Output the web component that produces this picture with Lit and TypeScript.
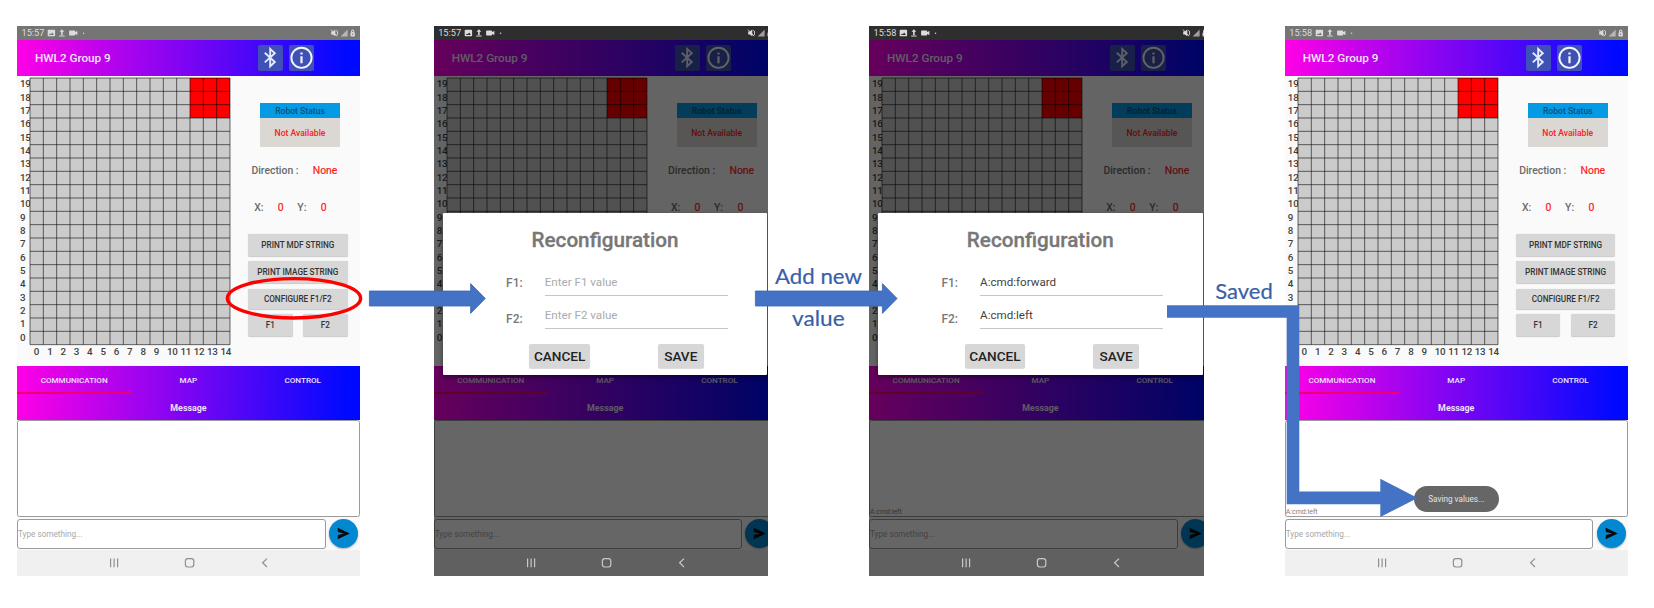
import { LitElement, html, svg, css, nothing } from "lit";
import { customElement, property } from "lit/decorators.js";
import { classMap } from "lit/directives/class-map.js";

const CELL = 13.333;
const range = (n: number) => Array.from({ length: n }, (_, i) => i);

@customElement("arena-map")
class ArenaMap extends LitElement {
  @property({ type: Boolean }) covered = false;
  static styles = css`
    :host { display: block; }
    .wrap { display: grid; grid-template-columns: 10px 200px; font: 500 9.8px/13.333px Roboto, sans-serif; color: #424242; }
    .rows { display: flex; flex-direction: column; margin-top: -1.1px; }
    .rows span { height: 13.333px; white-space: nowrap; letter-spacing: -0.2px; }
    .cols { grid-column: 2; display: grid; grid-template-columns: repeat(15, 13.333px); margin-top: -0.4px; }
    .cols span { padding-left: 3.8px; white-space: nowrap; letter-spacing: -0.3px; }
    svg { display: block; overflow: visible; }
  `;
  render() {
    const rows = this.covered ? 12 : 20;
    return html`<div class="wrap">
      <div class="rows">${range(20).map((i) => html`<span>${19 - i}</span>`)}</div>
      <svg width="200" height="266.7" viewBox="0 0 200 266.7">
        <rect width="200" height="266.7" fill="#cbcbcb"></rect>
        <rect x="160" width="40" height="40" fill="#ff0000"></rect>
        ${range(16).map((i) => svg`<line x1=${i * CELL} x2=${i * CELL} y1="0" y2=${rows * CELL} stroke="#000" stroke-opacity=".64" stroke-width=".9"></line>`)}
        ${range(rows + 1).map((i) => svg`<line y1=${i * CELL} y2=${i * CELL} x1="0" x2="200" stroke="#000" stroke-opacity=".64" stroke-width=".9"></line>`)}
      </svg>
      ${this.covered ? nothing : html`<div class="cols">${range(15).map((i) => html`<span>${i}</span>`)}</div>`}
    </div>`;
  }
}

@customElement("reconfig-dialog")
class ReconfigDialog extends LitElement {
  @property() f1 = "";
  @property() f2 = "";
  static styles = css`
    :host { display: block; box-sizing: border-box; background: #fff; border-radius: 1px; font-family: Roboto, sans-serif; box-shadow: 0 2px 5px rgba(0,0,0,.45); }
    h2 { margin: 0; padding-top: 14.2px; text-align: center; font: 500 20.7px/27px Roboto, sans-serif; color: #777; -webkit-text-stroke: .3px #777; }
    .fields { display: grid; grid-template-columns: 38.7px 183.3px; padding: 20.8px 0 0 63.4px; }
    .name { font: 500 12px/17px Roboto, sans-serif; color: #777; }
    .name.low { padding-top: 3.4px; }
    .field { height: 20px; margin-bottom: 12.4px; border-bottom: 1.4px solid #c6c6c6; font-size: 11.6px; line-height: 14px; color: #ababab; }
    .field.set { color: #3f3f3f; }
    .actions { display: flex; gap: 67.6px; padding: 2.6px 0 0 86.6px; }
    .btn { width: 60.7px; height: 23.8px; border-radius: 2px; background: #d7d7d7; box-shadow: 0 1px 1px rgba(0,0,0,.15); text-align: center; font: 500 13.6px/24.4px Roboto, sans-serif; color: #222; }
    .btn.save { width: 46.4px; }
  `;
  render() {
    return html`<h2>Reconfiguration</h2>
      <div class="fields">
        <span class="name">F1:</span>
        <div class=${classMap({ field: true, set: !!this.f1 })}>${this.f1 || "Enter F1 value"}</div>
        <span class="name low">F2:</span>
        <div class=${classMap({ field: true, set: !!this.f2 })}>${this.f2 || "Enter F2 value"}</div>
      </div>
      <div class="actions"><div class="btn">CANCEL</div><div class="btn save">SAVE</div></div>`;
  }
}

@customElement("phone-screen")
class PhoneScreen extends LitElement {
  @property() time = "15:57";
  @property() log = "";
  @property() toast = "";
  @property() f1 = "";
  @property() f2 = "";
  @property({ type: Boolean }) dialog = false;

  static styles = css`
    :host { display: block; overflow: hidden; height: 550px; font-family: Roboto, sans-serif; }
    .screen { position: relative; width: 343px; height: 550px; background: #fafafa; display: flex; flex-direction: column; }
    .status { height: 14px; flex: none; background: #757575; color: #dcdcdc; display: flex; align-items: center; justify-content: space-between; padding: 0 4px 0 4.5px; box-sizing: border-box; font-size: 9.2px; line-height: 14px; }
    .status > div { display: flex; align-items: center; }
    .status svg { display: block; }
    .header { height: 36.2px; flex: none; display: flex; align-items: center; background: linear-gradient(91deg, #ff00e6, #0009ff 96%); }
    .title { width: 223px; padding-left: 18px; color: #f1e6fb; font: 500 11.7px/16px Roboto, sans-serif; }
    .tile { width: 25.4px; height: 25.4px; margin-right: 5.6px; background: #3f51b5; border-radius: 2px; }
    .tile svg { display: block; }
    .body { height: 290px; flex: none; display: flex; background: #fafafa; }
    .body arena-map { padding: 2.3px 0 0 3px; }
    .robot { width: 80px; margin: 27.3px 0 0 30px; text-align: center; font: 500 8.6px/16px Roboto, sans-serif; }
    .robot .cap { background: #059ae4; color: #07517a; height: 14.7px; }
    .robot .val { background: #dbd7d3; color: #fb2020; height: 28.5px; line-height: 30.4px; }
    .pair { display: flex; height: 14px; font: 500 10.4px/15px Roboto, sans-serif; color: #6a6a6a; white-space: nowrap; }
    .pair b { font-weight: 400; color: #fb2020; -webkit-text-stroke: .2px #fb2020; }
    .dir { margin: 16.5px 0 0 21.4px; }
    .dir span { width: 61.4px; }
    .xy { margin: 22.6px 0 0 24.3px; }
    .xy > * { width: 23.5px; } .xy > b { width: 19.5px; }
    .buttons { display: grid; grid-template-columns: 44.7px 44.7px; column-gap: 10.3px; row-gap: 5.2px; margin: 19.9px 0 0 18px; }
    .key { height: 22.3px; border-radius: 1.5px; background: #d7d7d7; box-shadow: 0 .5px 1px rgba(0,0,0,.2); text-align: center; font: 500 8.2px/23px Roboto, sans-serif; color: #333; white-space: nowrap; }
    .wide { grid-column: 1 / 3; }
    .short { height: 20.2px; line-height: 21px; }
    .tabs { height: 54px; flex: none; background: linear-gradient(91deg, #ff00e6, #0009ff 96%); color: #efe0fd; }
    .tabrow { display: grid; grid-template-columns: repeat(3, 114.3px); text-align: center; font: 500 8.1px/28px Roboto, sans-serif; }
    .tab { height: 26px; border-bottom: 2px solid transparent; }
    .tab.on { border-bottom-color: #f0006c; }
    .msg { text-align: center; font: 700 8.9px/28.4px Roboto, sans-serif; height: 26px; }
    .log { height: 97px; flex: none; box-sizing: border-box; border: 1px solid #9a9a9a; border-radius: 2.5px; background: #fff; display: flex; align-items: flex-end; font-size: 7px; line-height: 8px; color: #808080; }
    .entry { display: flex; padding-top: 2px; height: 30.5px; flex: none; }
    .input { width: 308.6px; height: 29.6px; box-sizing: border-box; border: 1px solid #9a9a9a; border-radius: 3px; background: #fff; font-size: 8.2px; line-height: 28px; color: #a8a8a8; }
    .send { width: 29px; height: 29px; margin-left: 3.2px; border-radius: 50%; background: #0288d1; box-shadow: 0 1px 2px rgba(0,0,0,.3); }
    .nav { flex: 1; background: #f0f0f0; color: #8f8f8f; }
    .nav svg { display: block; }
    .shade { position: absolute; inset: 0; background: rgba(0,0,0,.6); }
    .dimmed .status { position: relative; z-index: 1; background: #2e2e2e; }
    .dimmed .nav { position: relative; z-index: 1; background: #606060; color: #c8c8c8; }
    reconfig-dialog { position: absolute; left: 9px; top: 186.7px; width: 324.6px; height: 162.6px; z-index: 2; }
    .toast { position: absolute; left: 129.4px; top: 460.4px; width: 84.4px; height: 25.6px; border-radius: 13px; background: #666; color: #e4e4e4; font-size: 8.2px; line-height: 26.6px; text-align: center; }
  `;

  render() {
    return html`<div class=${classMap({ screen: true, dimmed: this.dialog })}>
      <div class="status">
        <div>${this.time}
          <svg width="46" height="14" viewBox="0 0 46 14" fill="currentColor">
            <path fill-rule="evenodd" d="M4.4 3.7h6q.7 0 .7.7v5.2q0 .7-.7.7h-6q-.7 0-.7-.7V4.4q0-.7.7-.7zM4.9 9h5L8.2 6.6 6.9 8.2 6 7.4z"></path>
            <path d="M17.9 3.2l2.4 2.5h-1.6v3.2h-1.6V5.7h-1.6zM15.2 9.5h5.4v1h-5.4z"></path>
            <path d="M25.8 4.6h4.6q.7 0 .7.7v.8l2.3-1v3.8l-2.3-1v.8q0 .7-.7.7h-4.6q-.7 0-.7-.7V5.3q0-.7.7-.7z"></path>
            <circle cx="39.6" cy="7.2" r=".7"></circle>
          </svg>
        </div>
        <svg width="26" height="14" viewBox="0 0 26 14" fill="currentColor">
          <path d="M1.2 5.5h1.6L5.3 3.6v6.7L2.8 8.6H1.2z"></path>
          <path d="M1 3.6l6 6.6M6.2 4.4q1.6 0 1.4 2.6T6.4 9.8" fill="none" stroke="currentColor" stroke-width=".9"></path>
          <path d="M17.6 3.6v7h-7z" opacity=".65"></path>
          <path fill-rule="evenodd" d="M21.1 6.2V5q0-1.6 1.6-1.6T24.3 5v1.2l.6 1v2.6q0 .8-.8.8h-2.8q-.8 0-.8-.8V7.2zM22.1 6h1.2V5q0-.6-.6-.6t-.6.6zM22.2 7.6v1.5h1V7.6z"></path>
        </svg>
      </div>
      <div class="header">
        <div class="title">HWL2 Group 9</div>
        <div class="tile"><svg width="25.4" height="25.4" viewBox="0 0 25.4 25.4" fill="none" stroke="#e4ebff" stroke-width="1.9"><path d="M6.8 7.8l10 9.2-4.6 4.3V3.9l4.6 4.3-10 9.2"></path></svg></div>
        <div class="tile"><svg width="25.4" height="25.4" viewBox="0 0 25.4 25.4"><circle cx="12.5" cy="12.8" r="10.1" fill="none" stroke="#f2f5ff" stroke-width="1.9"></circle><path d="M11.4 7.4h2.2v2.2h-2.2zM11.4 11.2h2.2v7h-2.2z" fill="#f2f5ff"></path></svg></div>
      </div>
      <div class="body">
        <arena-map ?covered=${this.dialog}></arena-map>
        <div class="side">
          <div class="robot"><div class="cap">Robot Status</div><div class="val">Not Available</div></div>
          <div class="pair dir"><span>Direction :</span><b>None</b></div>
          <div class="pair xy"><span>X:</span><b>0</b><span>Y:</span><b>0</b></div>
          ${this.dialog ? nothing : html`<div class="buttons">
            <div class="key wide">PRINT MDF STRING</div>
            <div class="key wide">PRINT IMAGE STRING</div>
            <div class="key wide short">CONFIGURE F1/F2</div>
            <div class="key">F1</div><div class="key">F2</div>
          </div>`}
        </div>
      </div>
      <div class="tabs">
        <div class="tabrow"><div class="tab on">COMMUNICATION</div><div class="tab">MAP</div><div class="tab">CONTROL</div></div>
        <div class="msg">Message</div>
      </div>
      <div class="log">${this.log}</div>
      <div class="entry">
        <div class="input">Type something...</div>
        <div class="send"><svg width="29" height="29" viewBox="0 0 29 29"><path d="M8.6 8.8l12.3 5.7-12.3 5.7.3-4.3 6.1-1.4-6.1-1.4z" fill="#0a0a0a"></path></svg></div>
      </div>
      ${this.dialog ? html`<div class="shade"></div>` : nothing}
      <div class="nav"><svg width="343" height="26" viewBox="0 0 343 26" fill="none" stroke="currentColor" stroke-width="1.2">
        <path d="M93.6 8.4v8.8M97.1 8.4v8.8M100.6 8.4v8.8"></path>
        <rect x="168.4" y="8.6" width="8.4" height="8.4" rx="2.4"></rect>
        <path d="M250 8.6l-4.4 4.2 4.4 4.2"></path>
      </svg></div>
      ${this.dialog ? html`<reconfig-dialog .f1=${this.f1} .f2=${this.f2}></reconfig-dialog>` : nothing}
      ${this.toast ? html`<div class="toast">${this.toast}</div>` : nothing}
    </div>`;
  }
}

@customElement("app-root")
class AppRoot extends LitElement {
  static styles = css`
    :host { display: block; width: 1654px; height: 608px; background: #fff; position: relative; overflow: hidden; }
    .flow { display: flex; padding: 26px 0 0 17px; isolation: isolate; }
    .p1 { width: 343px; margin-right: 73.7px; flex: none; }
    .p2 { width: 334.3px; margin-right: 101px; flex: none; }
    .p3 { width: 335.4px; margin-right: 80.4px; flex: none; }
    .p4 { width: 343px; flex: none; }
    .marks { position: absolute; left: 0; top: 0; z-index: 1; }
    .marks text { font-family: Lato, "Open Sans", sans-serif; font-size: 22px; fill: #3860a8; stroke: #3860a8; stroke-width: .2px; }
  `;
  render() {
    return html`<div class="flow">
        <phone-screen class="p1" time="15:57"></phone-screen>
        <phone-screen class="p2" time="15:57" dialog></phone-screen>
        <phone-screen class="p3" time="15:58" dialog f1="A:cmd:forward" f2="A:cmd:left" log="A:cmd:left"></phone-screen>
        <phone-screen class="p4" time="15:58" log="A:cmd:left" toast="Saving values..."></phone-screen>
      </div>
      <svg class="marks" width="1654" height="608" viewBox="0 0 1654 608">
        <ellipse cx="294" cy="298.3" rx="66.6" ry="19.7" fill="none" stroke="#ff0000" stroke-width="3.4"></ellipse>
        <g fill="#4472c4" stroke="#3b67b4" stroke-width=".8">
          <path d="M369.4 291h101.2v-7.4l14.7 14.9-14.7 14.9V306H369.4z"></path>
          <path d="M755.4 291h127v-7.4l14.7 14.9-14.7 14.9V306h-127z"></path>
        </g>
        <path d="M1167 305.2h132.3v186.4h81v-12.9l37.4 19.2-37.4 19.2v-12.8h-93.6V317.8H1167z" fill="#4472c4"></path>
        <text x="775" y="284" textLength="87" lengthAdjust="spacingAndGlyphs">Add new</text>
        <text x="792" y="325.6" textLength="52.6" lengthAdjust="spacingAndGlyphs">value</text>
        <text x="1215.2" y="298.5" textLength="57.6" lengthAdjust="spacingAndGlyphs">Saved</text>
      </svg>`;
  }
}
